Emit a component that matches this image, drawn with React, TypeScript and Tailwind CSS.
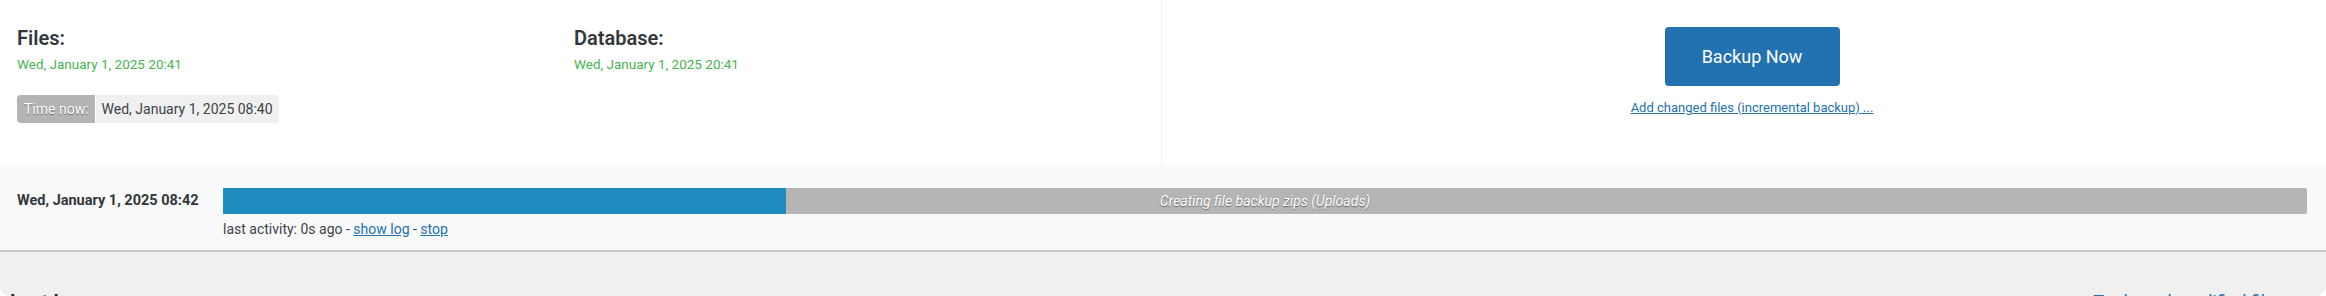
import React from "react";

export default function App() {
  const pct = 27;
  return (
    <div
      className="w-[2326px] h-[296px] bg-white overflow-hidden"
      style={{ fontFamily: "Roboto, 'Noto Sans', Arial, sans-serif" }}
    >
      <div className="h-full flex flex-col rounded-b-[10px] overflow-hidden">
        {/* Top section */}
        <div className="h-[165px] flex bg-white shrink-0">
          <div className="w-[1161px] flex shrink-0">
            <div className="w-[574px] pl-[17px] pt-[26px] shrink-0">
              <h3 className="text-[20px] leading-[24px] font-semibold text-[#32373c]">Files:</h3>
              <div className="mt-[5px] text-[13.5px] leading-[18px] text-[#46b450]">
                Wed, January 1, 2025 20:41
              </div>
              <div className="mt-[22px] flex h-[28px] w-max text-[14px] rounded-[4px] overflow-hidden">
                <span className="flex items-center pl-[7px] pr-[6px] bg-[#b4b4b4] text-white [text-shadow:0_1px_1px_rgba(0,0,0,0.45)] border-r border-white">
                  Time now:
                </span>
                <span className="flex items-center pl-[6px] pr-[6px] bg-[#f0f0f0] text-[#3c434a]">
                  Wed, January 1, 2025 08:40
                </span>
              </div>
            </div>
            <div className="pt-[26px]">
              <h3 className="text-[20px] leading-[24px] font-semibold text-[#32373c]">Database:</h3>
              <div className="mt-[5px] text-[13.5px] leading-[18px] text-[#46b450]">
                Wed, January 1, 2025 20:41
              </div>
            </div>
          </div>
          <div className="flex-1 border-l border-[#f0f0f0] pl-[16px] pt-[27px] flex flex-col items-center">
            <button className="w-[175px] h-[59px] rounded-[4px] bg-[#2271b1] text-white text-[18px] flex items-center justify-center">
              Backup Now
            </button>
            <a href="#" className="mt-[13px] text-[13px] leading-[18px] text-[#2271b1] underline">
              Add changed files (incremental backup) ...
            </a>
          </div>
        </div>

        {/* Progress band */}
        <div className="h-[87px] shrink-0 bg-[#f9f9f9] border-b-2 border-[#c8c9cc] flex pl-[17px] pr-[19px] pt-[23px]">
          <div className="w-[206px] h-[26px] flex items-center text-[14.5px] font-bold text-[#32373c] shrink-0">
            Wed, January 1, 2025 08:42
          </div>
          <div className="flex-1 flex flex-col">
            <div className="relative h-[26px] bg-[#b5b5b5] rounded-r-[2px] overflow-hidden">
              <div className="h-full bg-[#1e8cbe]" style={{ width: `${pct}%` }} />
              <div className="absolute inset-0 flex items-center justify-center text-[14px] italic text-white [text-shadow:0_1px_1px_rgba(0,0,0,0.45)]">
                Creating file backup zips (Uploads)
              </div>
            </div>
            <div className="mt-[6px] text-[14px] leading-[18px] text-[#3c434a]">
              last activity: 0s ago -{" "}
              <a href="#" className="text-[#2271b1] underline">show log</a> -{" "}
              <a href="#" className="text-[#2271b1] underline">stop</a>
            </div>
          </div>
        </div>

        {/* Bottom area */}
        <div className="flex-1 bg-[#f0f0f0] flex justify-between items-start pl-[10px] pr-[42px] pt-[38px]">
          <h2 className="text-[20px] leading-[24px] font-semibold text-[#1d2327]">Last log message:</h2>
          <a href="#" className="text-[18px] leading-[24px] text-[#2271b1]">
            Tools and modified files
          </a>
        </div>
      </div>
    </div>
  );
}
